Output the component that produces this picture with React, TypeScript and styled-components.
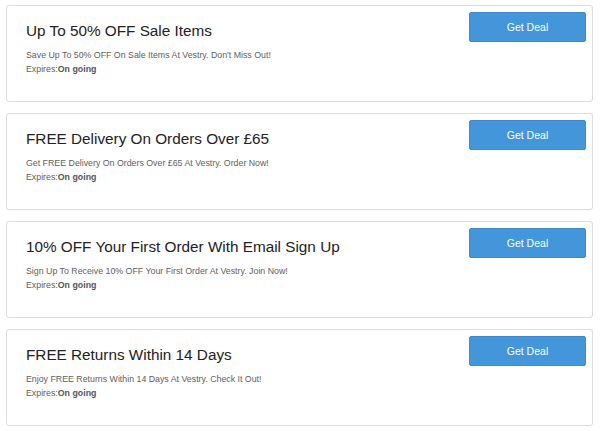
import React from 'react';
import styled, { createGlobalStyle } from 'styled-components';

const GlobalStyle = createGlobalStyle`
  body {
    margin: 0;
    background: #fff;
    font-family: "Liberation Sans", Arial, sans-serif;
  }
`;

const List = styled.div`
  padding: 5px 7px 0 6px;
  display: flex;
  flex-direction: column;
  gap: 11px;
`;

const Card = styled.div`
  box-sizing: border-box;
  height: 97px;
  border: 1px solid #dcdcdc;
  border-radius: 3px;
  background: #fff;
  display: flex;
  justify-content: space-between;
  align-items: flex-start;
  padding: 6px 6px 0 19px;
`;

const Info = styled.div`
  display: flex;
  flex-direction: column;
`;

const Title = styled.h3`
  margin: 10px 0 0;
  font-size: 15.3px;
  font-weight: normal;
  color: #222;
  line-height: 18px;
`;

const Desc = styled.p`
  margin: 8px 0 0;
  font-size: 8.8px;
  color: #606060;
  line-height: 14px;
`;

const Expires = styled.p`
  margin: 0;
  font-size: 8.8px;
  color: #606060;
  line-height: 14px;

  b {
    color: #555;
  }
`;

const DealButton = styled.button`
  width: 117px;
  height: 30px;
  border: 1px solid #3a8dd0;
  border-radius: 2px;
  background: #4396d9;
  color: #fff;
  font-family: inherit;
  font-size: 10.5px;
  cursor: pointer;
`;

type Deal = {
  title: string;
  text: string;
};

const deals: Deal[] = [
  {
    title: 'Up To 50% OFF Sale Items',
    text: "Save Up To 50% OFF On Sale Items At Vestry. Don't Miss Out!",
  },
  {
    title: 'FREE Delivery On Orders Over £65',
    text: 'Get FREE Delivery On Orders Over £65 At Vestry. Order Now!',
  },
  {
    title: '10% OFF Your First Order With Email Sign Up',
    text: 'Sign Up To Receive 10% OFF Your First Order At Vestry. Join Now!',
  },
  {
    title: 'FREE Returns Within 14 Days',
    text: 'Enjoy FREE Returns Within 14 Days At Vestry. Check It Out!',
  },
];

export default function App() {
  return (
    <>
      <GlobalStyle />
      <List>
        {deals.map((d) => (
          <Card key={d.title}>
            <Info>
              <Title>{d.title}</Title>
              <Desc>{d.text}</Desc>
              <Expires>
                Expires:<b>On going</b>
              </Expires>
            </Info>
            <DealButton>Get Deal</DealButton>
          </Card>
        ))}
      </List>
    </>
  );
}
